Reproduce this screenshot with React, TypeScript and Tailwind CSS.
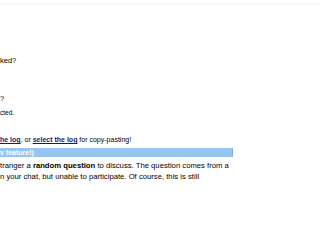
export default function App() {
  return (
    <div className="w-[320px] h-[240px] overflow-hidden bg-white text-black" style={{ fontFamily: '"Liberation Sans", Arial, sans-serif' }}>
      <div className="h-[3px]" />
      <div className="h-[2px] bg-[#f7f7f7]" />
      <div className="pt-[51px] text-[7.5px] leading-[9px] whitespace-nowrap">ked?</div>
      <div className="pt-[29px] text-[7.5px] leading-[9px] whitespace-nowrap">?</div>
      <div className="pt-[6px] text-[6.5px] leading-[8px] whitespace-nowrap">cted.</div>
      <div className="pt-[18px] text-[7px] leading-[10px] whitespace-nowrap">
        <a className="font-bold text-[#1a1a66] underline">he log</a>, or <a className="font-bold text-[#1a1a66] underline">select the log</a> for copy-pasting!
      </div>
      <div className="mt-[3px] w-[233px] h-[9px] bg-[#96c5f0] border-r border-[#7fb0de] text-white font-bold text-[7px] leading-[9px] whitespace-nowrap">v feature!)</div>
      <div className="pt-[3px] text-[7.7px] leading-[11px] whitespace-nowrap">
        <div>tranger a <b>random question</b> to discuss. The question comes from a</div>
        <div>n your chat, but unable to participate. Of course, this is still</div>
      </div>
    </div>
  );
}
